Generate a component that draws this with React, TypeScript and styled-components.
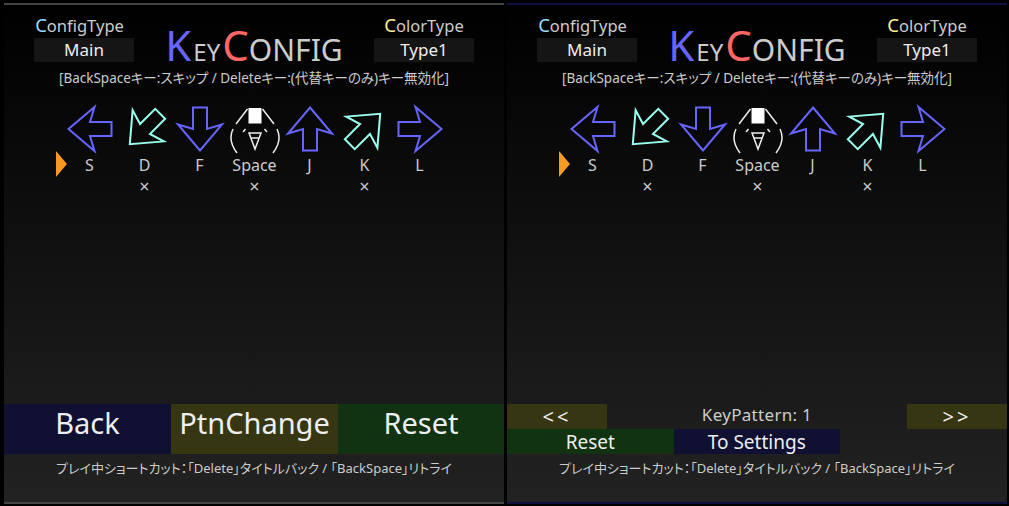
import styled, { createGlobalStyle } from "styled-components";

const FONT = `"Noto Sans", "Noto Sans CJK JP", sans-serif`;

const GlobalStyle = createGlobalStyle`
	html, body {
		margin: 0;
		padding: 0;
		background: #000;
		overflow: hidden;
	}
`;

const Wrapper = styled.div`
	width: 1009px;
	height: 506px;
	background: #000;
	display: flex;
	gap: 3px;
	padding: 3px 2px 2px 4px;
	box-sizing: border-box;
	font-family: ${FONT};
	color: #ccc;
`;

const Panel = styled.div<{ $line: string }>`
	width: 500px;
	height: 501px;
	box-sizing: border-box;
	display: flex;
	flex-direction: column;
	border-top: 2px solid ${(p) => p.$line};
	border-bottom: 2px solid ${(p) => p.$line};
	background: linear-gradient(#000, #222);
`;

const Header = styled.div`
	display: grid;
	grid-template-columns: 100px 1fr 100px;
	padding: 8px 30px 0;
	height: 57px;
	box-sizing: border-box;
`;

const TypeBlock = styled.div`
	display: flex;
	flex-direction: column;
	align-items: center;
`;

const TypeLabel = styled.div<{ $pull?: number }>`
	font-size: 16.5px;
	line-height: 24px;
	height: 24px;
	white-space: nowrap;
	color: #ccc;
	margin-right: ${(p) => p.$pull ?? 0}px;
`;

const Initial = styled.span<{ $color: string }>`
	color: ${(p) => p.$color};
	font-size: 18.5px;
`;

const TypeValue = styled.div`
	width: 100px;
	height: 24px;
	line-height: 24px;
	margin-top: 1px;
	background: #151515;
	color: #eee;
	text-align: center;
	font-size: 17px;
`;

const Title = styled.div`
	display: flex;
	justify-content: center;
	align-items: baseline;
	height: 48px;
	font-size: 30px;
	line-height: 64px;
	color: #ccc;
	white-space: nowrap;
`;

const TitleCap = styled.span<{ $color: string }>`
	color: ${(p) => p.$color};
	font-size: 42px;
	line-height: 64px;
`;

const TitleSmall = styled.span`
	font-size: 24px;
	margin: 0 2px;
`;

const Notice = styled.div`
	text-align: center;
	font-size: 13.5px;
	line-height: 20px;
	height: 20px;
	margin-top: 6px;
	color: #ccc;
	white-space: nowrap;
	font-feature-settings: "palt";
`;

const KeyRow = styled.div`
	position: relative;
	display: flex;
	padding-left: 58px;
	margin-top: 14px;
`;

const Cursor = styled.div`
	position: absolute;
	left: 52px;
	top: 49px;
	width: 0;
	height: 0;
	border-top: 13px solid transparent;
	border-bottom: 13px solid transparent;
	border-left: 11px solid #f79a23;
`;

const KeyColumn = styled.div`
	width: 55px;
	display: flex;
	flex-direction: column;
	align-items: center;
`;

const KeyIcon = styled.svg`
	width: 54px;
	height: 54px;
	display: block;
`;

const KeyName = styled.div`
	font-size: 16px;
	line-height: 22px;
	height: 22px;
	margin-top: -2px;
	color: #ccc;
	white-space: nowrap;
`;

const KeyMark = styled.div`
	font-size: 18px;
	line-height: 20px;
	height: 20px;
	color: #ccc;
`;

const Bottom = styled.div`
	margin-top: auto;
`;

const BigButtons = styled.div`
	display: grid;
	grid-template-columns: 167px 167px 166px;
`;

const BigButton = styled.div<{ $bg: string }>`
	height: 50px;
	line-height: 38px;
	background: ${(p) => p.$bg};
	color: #eee;
	text-align: center;
	font-size: 29px;
`;

const PatternRow = styled.div`
	display: grid;
	grid-template-columns: 100px 1fr 100px;
	height: 25px;
`;

const PagerButton = styled.div`
	height: 25px;
	background: #363613;
	color: #eee;
	text-align: center;
	font-size: 20px;
	line-height: 25px;
	letter-spacing: 3px;
`;

const PatternLabel = styled.div`
	text-align: center;
	font-size: 17px;
	line-height: 22px;
	letter-spacing: 0.3px;
	color: #ccc;
`;

const ActionRow = styled.div`
	display: flex;
	height: 25px;
`;

const ActionButton = styled.div<{ $bg: string }>`
	width: 166.5px;
	height: 25px;
	background: ${(p) => p.$bg};
	color: #eee;
	text-align: center;
	font-size: 19px;
	line-height: 26px;
`;

const Footer = styled.div`
	height: 48px;
	padding-top: 4px;
	box-sizing: border-box;
	text-align: center;
	font-size: 13px;
	line-height: 20px;
	color: #ccc;
	white-space: nowrap;
	font-feature-settings: "palt";
`;

const BLUE = "#6666ff";
const CYAN = "#99ffee";
const NAVY = "#101033";
const OLIVE = "#363613";
const GREEN = "#113311";

const keys = [
	{ name: "S", angle: -90, color: BLUE, off: false },
	{ name: "D", angle: -135, color: CYAN, off: true },
	{ name: "F", angle: 180, color: BLUE, off: false },
	{ name: "Space", angle: null, color: "#fff", off: true },
	{ name: "J", angle: 0, color: BLUE, off: false },
	{ name: "K", angle: 45, color: CYAN, off: true },
	{ name: "L", angle: 90, color: BLUE, off: false },
];

const Arrow = ({ angle, color }: { angle: number; color: string }) => (
	<KeyIcon viewBox="-27 -27 54 54">
		<path
			d="M0 -21.5 L22 4.5 L7 0 L7 21.5 L-7 21.5 L-7 0 L-22 4.5 Z"
			fill="none"
			stroke={color}
			strokeWidth="2"
			transform={`rotate(${angle})`}
		/>
	</KeyIcon>
);

const Onigiri = () => (
	<KeyIcon viewBox="-27 -27 54 54" fill="none" stroke="#eee" strokeWidth="1.5">
		<rect x="-6.5" y="-21" width="13" height="15.5" fill="#fff" stroke="none" />
		<path d="M-7.5 -20 L-19 -5 M7.5 -20 L19 -5" />
		<path d="M-22 0 C-26 8 -24 16 -18 24 M22 0 C26 8 24 16 18 24" />
		<path d="M-12 3 L-9.5 0 M12 3 L9.5 0" />
		<path d="M-6 4 L6 4 L0 20 Z M-4 9 L4 9" />
	</KeyIcon>
);

const PanelTop = () => (
	<>
		<Header>
			<TypeBlock>
				<TypeLabel $pull={9}><Initial $color="#99ddff">C</Initial>onfigType</TypeLabel>
				<TypeValue>Main</TypeValue>
			</TypeBlock>
			<Title>
				<TitleCap $color={BLUE}>K</TitleCap><TitleSmall>EY</TitleSmall><TitleCap $color="#ff6666">C</TitleCap>ONFIG
			</Title>
			<TypeBlock>
				<TypeLabel><Initial $color="#ffee99">C</Initial>olorType</TypeLabel>
				<TypeValue>Type1</TypeValue>
			</TypeBlock>
		</Header>
		<Notice>[BackSpaceキー:スキップ / Deleteキー:(代替キーのみ)キー無効化]</Notice>
		<KeyRow>
			<Cursor />
			{keys.map((k) => (
				<KeyColumn key={k.name}>
					{k.angle === null ? <Onigiri /> : <Arrow angle={k.angle} color={k.color} />}
					<KeyName>{k.name}</KeyName>
					{k.off && <KeyMark>×</KeyMark>}
				</KeyColumn>
			))}
		</KeyRow>
	</>
);

const FooterText = () => <Footer>プレイ中ショートカット：「Delete」タイトルバック / 「BackSpace」リトライ</Footer>;

const App = () => {
	return (
		<Wrapper>
			<GlobalStyle />
			<Panel $line="#444">
				<PanelTop />
				<Bottom>
					<BigButtons>
						<BigButton $bg={NAVY}>Back</BigButton>
						<BigButton $bg={OLIVE}>PtnChange</BigButton>
						<BigButton $bg={GREEN}>Reset</BigButton>
					</BigButtons>
					<FooterText />
				</Bottom>
			</Panel>
			<Panel $line="#101040">
				<PanelTop />
				<Bottom>
					<PatternRow>
						<PagerButton>&lt;&lt;</PagerButton>
						<PatternLabel>KeyPattern: 1</PatternLabel>
						<PagerButton>&gt;&gt;</PagerButton>
					</PatternRow>
					<ActionRow>
						<ActionButton $bg={GREEN}>Reset</ActionButton>
						<ActionButton $bg={NAVY}>To Settings</ActionButton>
					</ActionRow>
					<FooterText />
				</Bottom>
			</Panel>
		</Wrapper>
	);
};

export default App;
